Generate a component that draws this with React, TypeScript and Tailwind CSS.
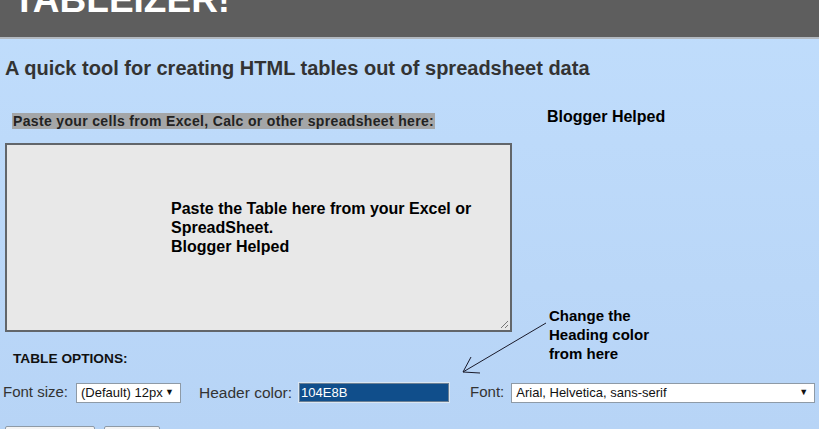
import React from 'react';

function Arrow() {
  return (
    <svg className="absolute left-0 top-0 pointer-events-none" width="819" height="429" viewBox="0 0 819 429">
      <g stroke="#1a1a2a" strokeWidth="1" fill="none">
        <line x1="546" y1="323" x2="463" y2="372" />
        <line x1="463" y1="372" x2="471" y2="357" />
        <line x1="463" y1="372" x2="480" y2="373" />
      </g>
    </svg>
  );
}

function SelectBox({ label, className }: { label: string; className: string }) {
  return (
    <div className={`flex items-center justify-between h-[20px] bg-white border border-[#8e9aa6] pl-[4px] pr-[6px] text-[13px] text-[#111] ${className}`}>
      <span>{label}</span>
      <span className="text-[9px] leading-none">▼</span>
    </div>
  );
}

export default function App() {
  return (
    <div className="relative w-[819px] h-[429px] overflow-hidden bg-gradient-to-b from-[#c0ddfc] to-[#b7d4f6] font-['Liberation_Sans',Arial,sans-serif]">
      {/* banner */}
      <div className="h-[39px] bg-[#5e5e5e] border-b-2 border-[#b3b9c0] overflow-hidden">
        <h1 className="ml-[13px] mt-[-19px] text-[37px] leading-none font-bold text-white">TABLEIZER!</h1>
      </div>

      <h2 className="ml-[5px] mt-[19px] text-[20px] leading-[20px] font-bold text-[#333]">
        A quick tool for creating HTML tables out of spreadsheet data
      </h2>

      <div className="flex mt-[35px]">
        <div className="w-[507px] ml-[5px]">
          <div className="ml-[7px] w-fit bg-[#a4a6a8] px-[1px] text-[14px] leading-[16px] tracking-[0.34px] font-bold text-[#222]">
            Paste your cells from Excel, Calc or other spreadsheet here:
          </div>
          <div className="relative mt-[14px] h-[189px] bg-[#e8e8e8] border-2 border-[#62666a]">
            <div className="pl-[164px] pt-[54px] text-[16px] leading-[19px] font-bold text-black">
              Paste the Table here from your Excel or
              <br />
              SpreadSheet.
              <br />
              Blogger Helped
            </div>
            <svg className="absolute right-[1px] bottom-[1px]" width="9" height="9" viewBox="0 0 9 9">
              <g stroke="#777" strokeWidth="1">
                <line x1="1" y1="8" x2="8" y2="1" />
                <line x1="5" y1="8" x2="8" y2="5" />
              </g>
            </svg>
          </div>
          <div className="ml-[8px] mt-[20px] text-[13.7px] leading-[14px] font-bold text-[#111]">TABLE OPTIONS:</div>
        </div>

        <div className="ml-[35px] flex flex-col">
          <div className="mt-[-6px] text-[16px] leading-[19px] font-bold text-black">Blogger Helped</div>
          <div className="ml-[2px] mt-[180px] text-[15px] leading-[19px] font-bold text-black">
            Change the
            <br />
            Heading color
            <br />
            from here
          </div>
        </div>
      </div>

      <div className="flex items-center mt-[15px] ml-[3px] text-[15px] text-[#333]">
        <span>Font size:</span>
        <SelectBox label="(Default) 12px" className="ml-[8px] w-[105px]" />
        <span className="ml-[18px] text-[15.5px]">Header color:</span>
        <div className="ml-[6px] w-[152px] h-[21px] border border-[#dbe6f1] bg-[#104E8B] p-0">
          <div className="h-full border border-[#6a7f94] text-[13px] leading-[17px] text-white pl-[1px]">104E8B</div>
        </div>
        <span className="ml-[20px]">Font:</span>
        <SelectBox label="Arial, Helvetica, sans-serif" className="ml-[7px] w-[304px]" />
      </div>

      <div className="flex mt-[22px] ml-[5px] gap-[9px]">
        <div className="w-[90px] h-[24px] bg-[#f4f4f4] border border-[#8e9aa6] rounded-[2px]" />
        <div className="w-[56px] h-[24px] bg-[#f4f4f4] border border-[#8e9aa6] rounded-[2px]" />
      </div>

      <Arrow />
    </div>
  );
}
